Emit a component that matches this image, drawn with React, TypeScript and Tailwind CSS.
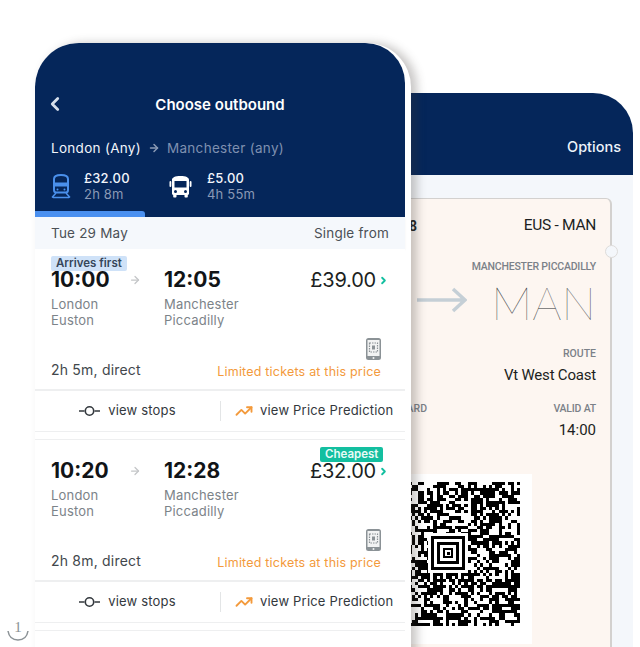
import { ArrowRight, ChevronLeft, ChevronRight, TrendingUp } from "lucide-react";

const journeys = [
  { badge: "Arrives first", badgeClass: "bg-[#cfe2f8] text-[#36465a] ml-[16px]", depart: "10:00", arrive: "12:05", price: "£39.00", duration: "2h 5m, direct" },
  { badge: "Cheapest", badgeClass: "bg-[#13bfa0] text-[#e9fbf7] ml-[285px]", depart: "10:20", arrive: "12:28", price: "£32.00", duration: "2h 8m, direct" },
];

const TrainIcon = () => (
  <svg width="20" height="26" viewBox="0 0 20 26" fill="none" stroke="#4a90ec" strokeWidth="2">
    <path d="M3 6c0-2.500 3-4 7-4s7 1.500 7 4v11c0 1.500-1 2.500-2.500 2.500h-9C4 19.500 3 18.500 3 17V6z" />
    <path d="M3 9.500h14v4H3z" fill="#4a90ec" stroke="none" />
    <circle cx="6.500" cy="16.500" r="1" fill="#4a90ec" stroke="none" />
    <circle cx="13.500" cy="16.500" r="1" fill="#4a90ec" stroke="none" />
    <path d="M5 20l-4 4.500M15 20l4 4.500M2 24.500h16" strokeWidth="1.500" />
  </svg>
);

const BusIcon = () => (
  <svg width="23" height="23" viewBox="0 0 23 23" fill="#ffffff">
    <path fillRule="evenodd" d="M3 5c0-2.500 3-4 8.500-4S20 2.500 20 5v13.500c0 .8-.5 1.300-1.200 1.500v1.500c0 .6-.4 1-1 1h-1.300c-.6 0-1-.4-1-1V20H7.500v1.500c0 .6-.4 1-1 1H5.200c-.6 0-1-.4-1-1V20C3.500 19.800 3 19.300 3 18.500V5zm2.500 1v6.500h12V6h-12zm1 9a1.500 1.500 0 100 3 1.500 1.500 0 000-3zm10 0a1.500 1.500 0 100 3 1.500 1.500 0 000-3z" />
    <rect x="0.500" y="6" width="1.800" height="6" rx="0.900" />
    <rect x="20.700" y="6" width="1.800" height="6" rx="0.900" />
  </svg>
);

const PhoneTicketIcon = () => (
  <svg width="15" height="22" viewBox="0 0 15 22">
    <rect x="0" y="0" width="15" height="22" rx="2.500" fill="#8b9296" />
    <rect x="1.500" y="2" width="12" height="16" fill="#f2f3f3" />
    <rect x="3.500" y="5" width="8" height="9" fill="none" stroke="#8b9296" strokeWidth="1.200" strokeDasharray="1.500 1" />
    <rect x="6" y="7.500" width="3" height="4" fill="#8b9296" />
    <circle cx="7.500" cy="20" r="1" fill="#f2f3f3" />
  </svg>
);

const StopsIcon = () => (
  <svg width="21" height="10" viewBox="0 0 21 10" fill="none" stroke="#33383d" strokeWidth="1.600">
    <path d="M0 5h5.500M15.500 5H21" />
    <circle cx="10.500" cy="5" r="4.200" />
  </svg>
);

function JourneyCard({ journey }: { journey: (typeof journeys)[number] }) {
  return (
    <div className="w-[370px] h-[191px] bg-white flex flex-col">
      <div className="h-[15px]">
        <span className={`inline-block h-[15px] px-[5px] rounded-[2px] text-[11.5px] leading-[15px] font-semibold ${journey.badgeClass}`}>
          {journey.badge}
        </span>
      </div>
      <div className="h-[32px] px-[16px] flex items-center">
        <span className="w-[78px] text-[21px] font-bold text-[#111417]">{journey.depart}</span>
        <ArrowRight className="w-[12px] h-[12px] text-[#c4c6c8]" strokeWidth={2.500} />
        <span className="ml-[23px] text-[21px] font-bold text-[#111417]">{journey.arrive}</span>
        <span className="ml-auto text-[20px] leading-none text-[#1c1f22] tracking-[-0.2px] mr-[1px]">{journey.price}</span>
        <ChevronRight className="w-[11px] h-[11px] ml-[1px] text-[#13bfa0]" strokeWidth={4} />
      </div>
      <div className="pl-[16px] flex text-[13px] leading-[16px] tracking-[0.2px] text-[#7c8389]">
        <div className="w-[113px]">London<br />Euston</div>
        <div>Manchester<br />Piccadilly</div>
      </div>
      <div className="h-[61px] pl-[16px] pr-[24px] pb-[9px] flex items-end justify-between">
        <span className="text-[14px] leading-[20px] tracking-[0.2px] text-[#42474c]">{journey.duration}</span>
        <div className="flex flex-col items-end gap-[4px]">
          <PhoneTicketIcon />
          <span className="text-[12.500px] leading-[16px] tracking-[0.2px] text-[#f39a3c]">Limited tickets at this price</span>
        </div>
      </div>
      <div className="h-[43px] border-t-2 border-b border-[#eeeff0] flex items-center text-[13px] text-[#33383d] tracking-[0.2px]">
        <div className="w-[185px] flex items-center justify-center gap-[8px]">
          <StopsIcon />
          <span>view stops</span>
        </div>
        <div className="w-px h-[20px] bg-[#e3e5e6]" />
        <div className="flex-1 flex items-center pl-[14px] gap-[7px]">
          <TrendingUp className="w-[18px] h-[18px] text-[#f39a3c]" strokeWidth={2.500} />
          <span>view Price Prediction</span>
        </div>
      </div>
      <div className="flex-1 bg-white border-b border-[#eeeff0]" />
    </div>
  );
}

// seeded so the code looks the same on every run
function barcodeModules() {
  const cells: { x: number; y: number }[] = [];
  let seed = 1337;
  for (let row = 0; row < 46; row++) {
    for (let col = 0; col < 42; col++) {
      seed = (seed * 16807) % 2147483647;
      if (seed % 100 < 54) cells.push({ x: col * 3.1, y: row * 3.13 });
    }
  }
  return cells;
}

const AztecCode = () => {
  const rings = [
    { half: 20, fill: "#ffffff" },
    { half: 17, fill: "#000000" },
    { half: 13.900, fill: "#ffffff" },
    { half: 10.800, fill: "#000000" },
    { half: 7.700, fill: "#ffffff" },
    { half: 4.700, fill: "#000000" },
    { half: 3, fill: "#ffffff" },
    { half: 1.500, fill: "#000000" },
  ];
  return (
    <svg width="130" height="144" viewBox="0 0 130 144" shapeRendering="crispEdges">
      {barcodeModules().map((cell, index) => (
        <rect key={index} x={cell.x} y={cell.y} width="3.100" height="3.130" fill="#000000" />
      ))}
      {rings.map((ring) => (
        <rect key={ring.half} x={58 - ring.half} y={71 - ring.half} width={ring.half * 2} height={ring.half * 2} fill={ring.fill} />
      ))}
    </svg>
  );
};

const BackPhone = () => (
  <div className="absolute left-[263px] top-[93px] w-[370px] h-[600px] rounded-t-[40px] bg-[#f4f7fb] overflow-hidden font-['Roboto',sans-serif]">
    <div className="h-[82px] bg-[#05265a] flex items-start justify-end pt-[44px] pr-[12px]">
      <span className="text-[14.500px] leading-[20px] font-medium text-[#eef3fb] font-['Inter',sans-serif]">Options</span>
    </div>
    <div className="relative ml-[21px] mr-[21px] mt-[23px] h-[520px] bg-[#fdf6f1] rounded-[6px] border-t border-r-2 border-[#d3d1cf] text-right text-[#1c1f22]">
      <div className="absolute right-[-8px] top-[46px] w-[13px] h-[13px] rounded-full bg-[#f4f7fb] border border-[#dddbd9]" />
      <div className="flex justify-between items-center h-[28px] mt-[13px] pr-[14px]">
        <span className="w-[133px] text-[14px] font-bold">29 May 18</span>
        <span className="text-[15.500px] tracking-[-0.3px]">EUS - MAN</span>
      </div>
      <div className="flex justify-between pr-[14px] mt-[20px]">
        <div className="w-[183px] flex justify-end pr-[0px] pt-[27px]">
          <svg width="50" height="26" viewBox="0 0 50 26" fill="none" stroke="#c5cfd6" strokeWidth="3.500">
            <path d="M0 13h48M36 2l12 11-12 11" />
          </svg>
        </div>
        <div>
          <div className="text-[10.500px] leading-[14px] font-medium text-[#7b8188] tracking-[-0.2px]">MANCHESTER PICCADILLY</div>
          <div className="text-[46px] leading-[48px] font-thin text-[#2b2e31] font-['Lato',sans-serif] mt-[5px]">MAN</div>
        </div>
      </div>
      <div className="pr-[14px] mt-[20px]">
        <div className="text-[10.500px] leading-[14px] font-medium text-[#7b8188]">ROUTE</div>
        <div className="text-[15px] leading-[20px] mt-[4px] tracking-[-0.2px]">Vt West Coast</div>
      </div>
      <div className="flex justify-between pr-[14px] mt-[17px]">
        <span className="w-[143px] text-[10.500px] leading-[14px] font-medium text-[#7b8188]">STANDARD</span>
        <div>
          <div className="text-[10.500px] leading-[14px] font-medium text-[#7b8188] tracking-[-0.2px]">VALID AT</div>
          <div className="text-[15px] leading-[20px] mt-[4px]">14:00</div>
        </div>
      </div>
      <div className="w-[248px] h-[170px] mt-[34px] bg-white flex justify-end pt-[8px] pr-[12px]">
        <AztecCode />
      </div>
    </div>
  </div>
);

const FrontPhone = () => (
  <div className="absolute left-[35px] top-[43px] w-[376px] h-[640px] bg-white rounded-t-[44px] shadow-[6px_0_10px_rgba(60,55,50,0.28)] overflow-hidden">
    <div className="w-[370px] h-[174px] bg-[#05265a] rounded-t-[40px] flex flex-col">
      <div className="relative h-[62px] pt-[52px] flex justify-center items-start">
        <ChevronLeft className="absolute left-[9px] top-[50px] w-[22px] h-[22px] text-[#d5deeb]" strokeWidth={3} />
        <span className="h-[20px] text-[15px] leading-[20px] font-semibold text-white">Choose outbound</span>
      </div>
      <div className="flex items-center pl-[16px] mt-[33px] h-[20px] text-[13.500px] tracking-[0.3px]">
        <span className="text-[#f2f5fa]">London (Any)</span>
        <ArrowRight className="w-[12px] h-[12px] mx-[7px] text-[#8b9ab5]" strokeWidth={3} />
        <span className="text-[#7f90b0]">Manchester (any)</span>
      </div>
      <div className="flex pl-[16px] mt-[10px] h-[36px]">
        <div className="w-[118px] flex items-center gap-[13px]">
          <TrainIcon />
          <div className="text-[13px] leading-[16px] tracking-[0.2px]">
            <div className="text-[#f2f5fa] font-medium">£32.00</div>
            <div className="text-[#8a99b5]">2h 8m</div>
          </div>
        </div>
        <div className="flex items-center gap-[15px]">
          <BusIcon />
          <div className="text-[13px] leading-[16px] tracking-[0.2px]">
            <div className="text-[#f2f5fa] font-medium">£5.00</div>
            <div className="text-[#8a99b5]">4h 55m</div>
          </div>
        </div>
      </div>
      <div className="mt-auto w-[110px] h-[6px] bg-[#4a90f0] rounded-tr-[3px]" />
    </div>
    <div className="w-[370px] h-[32px] bg-[#f5f8fc] px-[16px] flex items-center justify-between text-[13.500px] tracking-[0.2px] text-[#4b5056] shadow-[0_1px_2px_rgba(0,0,0,0.06)]">
      <span>Tue 29 May</span>
      <span>Single from</span>
    </div>
    {journeys.map((journey) => (
      <JourneyCard key={journey.depart} journey={journey} />
    ))}
  </div>
);

export default function App() {
  return (
    <div className="relative w-[640px] h-[647px] overflow-hidden bg-white font-['Inter',sans-serif]">
      <BackPhone />
      <FrontPhone />
      <div className="absolute left-[7px] top-[620px] w-[22px] h-[22px] flex flex-col items-center text-[#8b9296]">
        <span className="text-[15px] leading-[15px] font-light font-['Liberation_Serif',serif]">1</span>
        <svg className="absolute left-0 top-[10px]" width="22" height="12" viewBox="0 0 22 12" fill="none" stroke="#8b9296" strokeWidth="1.500">
          <path d="M1 1c1 6 5 9 10 9s9-3 10-9" />
        </svg>
      </div>
    </div>
  );
}
